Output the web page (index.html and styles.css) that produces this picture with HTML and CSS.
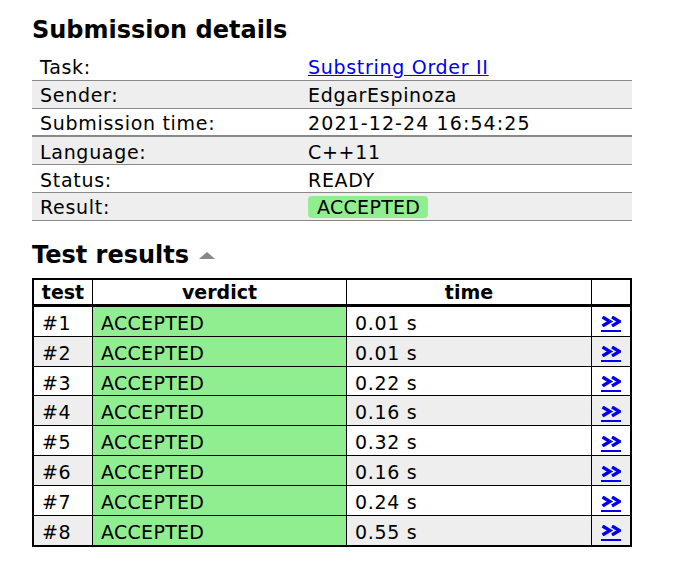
FILE: index.html
```html
<!DOCTYPE html>
<html>
<head>
<meta charset="utf-8">
<link rel="stylesheet" href="styles.css">
</head>
<body>
<div class="content">
  <h2 class="title">Submission details</h2>
  <table class="summary">
    <tr><td class="label">Task:</td><td><a href="#">Substring Order II</a></td></tr>
    <tr class="alt"><td class="label">Sender:</td><td>EdgarEspinoza</td></tr>
    <tr class="thick"><td class="label">Submission time:</td><td class="num">2021-12-24 16:54:25</td></tr>
    <tr class="alt"><td class="label">Language:</td><td>C++11</td></tr>
    <tr><td class="label">Status:</td><td>READY</td></tr>
    <tr class="alt"><td class="label">Result:</td><td><span class="badge">ACCEPTED</span></td></tr>
  </table>

  <h2 class="title tests-title">Test results <span class="caret"></span></h2>
  <table class="results">
    <thead>
      <tr><th class="c-test">test</th><th class="c-verdict">verdict</th><th class="c-time">time</th><th class="c-link"></th></tr>
    </thead>
    <tbody>
      <tr><td>#1</td><td class="ok">ACCEPTED</td><td>0.01 s</td><td class="lk"><a href="#"><svg class="chev" viewBox="0 0 20 11"><polyline points="1.5,1 9,5.5 1.5,10"/><polyline points="11,1 18.5,5.5 11,10"/></svg></a></td></tr>
      <tr class="alt"><td>#2</td><td class="ok">ACCEPTED</td><td>0.01 s</td><td class="lk"><a href="#"><svg class="chev" viewBox="0 0 20 11"><polyline points="1.5,1 9,5.5 1.5,10"/><polyline points="11,1 18.5,5.5 11,10"/></svg></a></td></tr>
      <tr><td>#3</td><td class="ok">ACCEPTED</td><td>0.22 s</td><td class="lk"><a href="#"><svg class="chev" viewBox="0 0 20 11"><polyline points="1.5,1 9,5.5 1.5,10"/><polyline points="11,1 18.5,5.5 11,10"/></svg></a></td></tr>
      <tr class="alt"><td>#4</td><td class="ok">ACCEPTED</td><td>0.16 s</td><td class="lk"><a href="#"><svg class="chev" viewBox="0 0 20 11"><polyline points="1.5,1 9,5.5 1.5,10"/><polyline points="11,1 18.5,5.5 11,10"/></svg></a></td></tr>
      <tr><td>#5</td><td class="ok">ACCEPTED</td><td>0.32 s</td><td class="lk"><a href="#"><svg class="chev" viewBox="0 0 20 11"><polyline points="1.5,1 9,5.5 1.5,10"/><polyline points="11,1 18.5,5.5 11,10"/></svg></a></td></tr>
      <tr class="alt"><td>#6</td><td class="ok">ACCEPTED</td><td>0.16 s</td><td class="lk"><a href="#"><svg class="chev" viewBox="0 0 20 11"><polyline points="1.5,1 9,5.5 1.5,10"/><polyline points="11,1 18.5,5.5 11,10"/></svg></a></td></tr>
      <tr><td>#7</td><td class="ok">ACCEPTED</td><td>0.24 s</td><td class="lk"><a href="#"><svg class="chev" viewBox="0 0 20 11"><polyline points="1.5,1 9,5.5 1.5,10"/><polyline points="11,1 18.5,5.5 11,10"/></svg></a></td></tr>
      <tr class="alt"><td>#8</td><td class="ok">ACCEPTED</td><td>0.55 s</td><td class="lk"><a href="#"><svg class="chev" viewBox="0 0 20 11"><polyline points="1.5,1 9,5.5 1.5,10"/><polyline points="11,1 18.5,5.5 11,10"/></svg></a></td></tr>
    </tbody>
  </table>
</div>
</body>
</html>
```
FILE: styles.css
```css
html, body {
  margin: 0;
  padding: 0;
  background: #fff;
}
body {
  font-family: "DejaVu Sans", Verdana, sans-serif;
  font-size: 19px;
  letter-spacing: 0.7px;
  color: #000;
}
.content {
  padding: 14px 32px 0 32px;
  width: 600px;
}
.title {
  font-size: 24px;
  font-weight: bold;
  letter-spacing: 0;
  margin: 0 0 7px 0;
  line-height: 32px;
}
.tests-title {
  margin-top: 18px;
  margin-bottom: 7px;
  display: flex;
  align-items: center;
  gap: 10px;
}
.caret {
  width: 0;
  height: 0;
  border-left: 8px solid transparent;
  border-right: 8px solid transparent;
  border-bottom: 7px solid #888;
  margin-top: 2px;
}
table {
  border-collapse: collapse;
  width: 600px;
}
.summary td {
  height: 24.8px;
  padding: 2px 8px 0 8px;
  border-bottom: 1px solid #888;
  line-height: 22px;
  vertical-align: middle;
}
.summary td.label {
  width: 252px;
}
.summary td.num {
  letter-spacing: 1.1px;
}
.summary tr.alt td {
  background: #eee;
}
.summary tr.thick td {
  border-bottom: 2px solid #888;
}
.summary a {
  color: #0000ee;
}
.badge {
  display: inline-block;
  background: #90ee90;
  border-radius: 4px;
  padding: 0 8px 0 9px;
  line-height: 22px;
  letter-spacing: 0.3px;
}
.results {
  border: 2px solid #000;
}
.results th {
  border: 1px solid #000;
  height: 23px;
  font-weight: bold;
  letter-spacing: 0;
  padding: 1px 0 0 0;
  text-align: center;
  line-height: 22px;
}
.results thead tr {
  border-bottom: 3px solid #000;
}
.results th.c-test { width: 58px; }
.results th.c-verdict { width: 253px; }
.results th.c-time { width: 244px; }
.results td {
  border: 1px solid #000;
  height: 25.9px;
  padding: 3px 8px 0 8px;
  line-height: 22px;
}
.results tr.alt td {
  background: #eee;
}
.results td.ok,
.results tr.alt td.ok {
  background: #90ee90;
  letter-spacing: 0.3px;
}
.results td.lk {
  text-align: center;
  padding: 0;
}
.results td.lk a {
  display: inline-block;
  vertical-align: middle;
  padding-bottom: 3px;
  border-bottom: 2px solid #0000ee;
  line-height: 0;
  margin-top: 3px;
}
.chev {
  width: 20px;
  height: 11px;
  fill: none;
  stroke: #0000ee;
  stroke-width: 3.3;
  stroke-linejoin: miter;
}
```
